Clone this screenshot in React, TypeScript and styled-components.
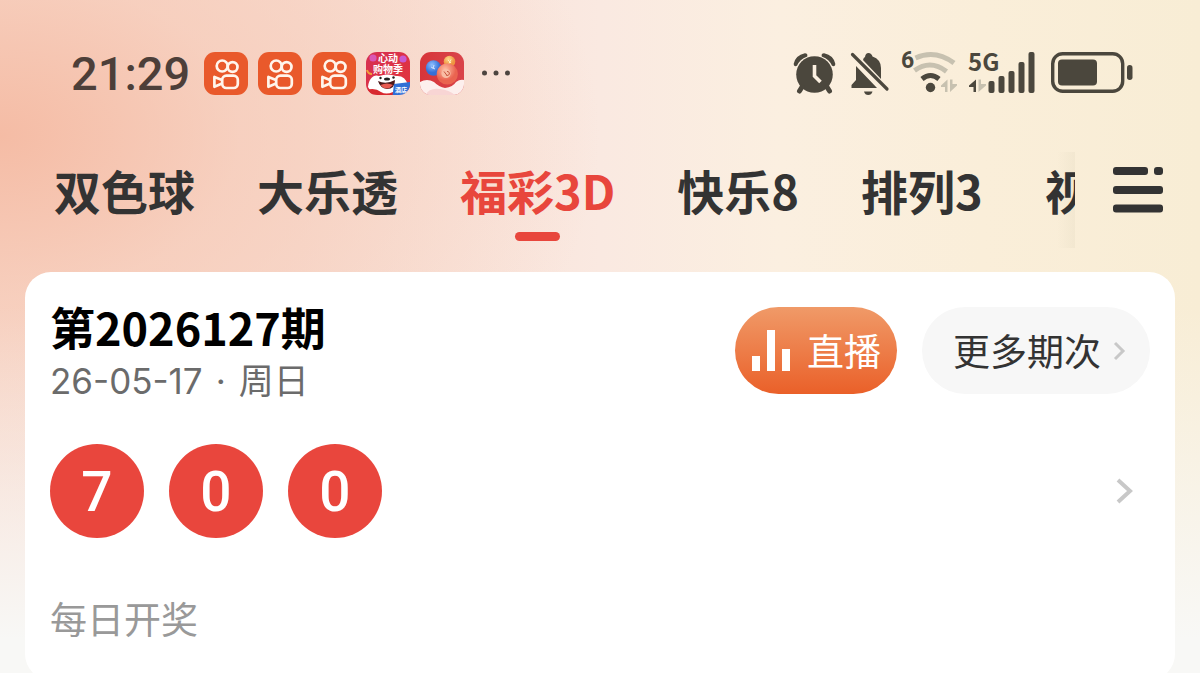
import React from 'react';
import styled, { createGlobalStyle } from 'styled-components';

const GlobalStyle = createGlobalStyle`
  *, *::before, *::after { box-sizing: border-box; }
  body {
    margin: 0;
    background: #f8f7f5;
    font-family: "Noto Sans CJK SC", sans-serif;
    color: #333;
  }
  button { font: inherit; color: inherit; border: 0; padding: 0; background: none; cursor: pointer; }
  svg { display: block; flex: none; overflow: visible; }
`;

const Page = styled.div`
  min-height: 100vh;
  overflow: hidden;
  background:
    linear-gradient(to bottom, rgba(248, 247, 246, 0) 45%, #f8f8f6 94%),
    radial-gradient(ellipse 50% 60% at 0% 20%, #f5bca5 0%, rgba(246, 200, 180, 0.6) 40%, rgba(250, 226, 216, 0) 100%),
    linear-gradient(to right, #f8d8cb 0%, #f8ddd2 25%, #fae9e1 50%, #fbefe0 65%, #faeed9 82%, #f8edd5 100%);
`;

const StatusBar = styled.header`
  display: flex;
  align-items: center;
  justify-content: space-between;
  padding: 52px 67px 0 71px;
`;

const StatusGroup = styled.div`
  display: flex;
  align-items: center;
  gap: 10px;
  height: 44px;
`;

const Clock = styled.time`
  font: 500 47px/44px Roboto, sans-serif;
  color: #4d3f39;
  margin-right: 4px;
`;

const TabBar = styled.div`
  display: flex;
  align-items: flex-start;
  justify-content: space-between;
  padding-top: 56px;
`;

const Tabs = styled.nav`
  flex: 1;
  min-width: 0;
  display: flex;
  gap: 62px;
  padding-left: 54px;
  overflow: hidden;
  height: 96px;
  background: linear-gradient(to left, rgba(225, 215, 190, 0.28), rgba(225, 215, 190, 0) 18px);
`;

const Tab = styled.button<{ $active?: boolean }>`
  flex: none;
  display: flex;
  flex-direction: column;
  align-items: center;
  justify-content: space-between;
  height: 89px;
  font-size: 47px;
  font-weight: 700;
  line-height: 76px;
  white-space: nowrap;
  color: ${(p) => (p.$active ? '#e8463c' : '#333')};
  &::after {
    content: '';
    width: 45px;
    height: 9px;
    border-radius: 5px;
    background: ${(p) => (p.$active ? '#e8463c' : 'transparent')};
  }
`;

const MenuButton = styled.button`
  flex: none;
  width: 125px;
  height: 76px;
  display: flex;
  align-items: center;
  justify-content: center;
`;

const Card = styled.main`
  margin: 24px 25px 0;
  padding: 35px 25px 36px;
  border-radius: 26px;
  background: #fff;
`;

const CardHead = styled.div`
  display: flex;
  align-items: flex-start;
  justify-content: space-between;
`;

const Issue = styled.h1`
  margin: 0;
  font-size: 45px;
  font-weight: 700;
  line-height: 40px;
  color: #000;
`;

const DrawDate = styled.p`
  display: flex;
  gap: 13px;
  margin: 16px 0 0;
  font: 400 35px/36px Inter, "Noto Sans CJK SC", sans-serif;
  color: #6b6b6b;
`;

const Actions = styled.div`
  display: flex;
  gap: 25px;
`;

const Pill = styled.button<{ $live?: boolean }>`
  display: flex;
  align-items: center;
  height: 87px;
  border-radius: 44px;
  font-size: 37px;
  line-height: 87px;
  gap: ${(p) => (p.$live ? 17 : 12)}px;
  padding: ${(p) => (p.$live ? '0 16px 0 17px' : '0 24px 0 31px')};
  color: ${(p) => (p.$live ? '#fff' : '#333')};
  background: ${(p) => (p.$live ? 'linear-gradient(#f09a68, #ea6029)' : '#f7f7f7')};
`;

const ResultRow = styled.a`
  display: flex;
  align-items: center;
  justify-content: space-between;
  margin-top: 45px;
  padding-right: 17px;
  text-decoration: none;
`;

const Balls = styled.span`
  display: flex;
  gap: 25px;
`;

const Ball = styled.span`
  width: 94px;
  height: 94px;
  border-radius: 50%;
  background: #e9463d;
  color: #fff;
  text-align: center;
  font: 500 55px/96px Roboto, sans-serif;
`;

const Note = styled.p`
  margin: 54px 0 0;
  font-size: 37px;
  line-height: 52px;
  color: #999;
`;

const KuaishouIcon = () => (
  <svg width="44" height="44" viewBox="0 0 44 44" fill="none" stroke="#fff5ec" strokeWidth="2.7">
    <rect width="44" height="43" rx="11" fill="#e9592b" stroke="none" />
    <circle cx="18.2" cy="14" r="5.5" />
    <circle cx="28.6" cy="15" r="4.9" />
    <rect x="18.2" y="23.6" width="15.6" height="12.4" rx="4.2" />
    <path d="M18 28 L10.4 24.9 V34.8 L18 31.6" strokeLinejoin="round" />
  </svg>
);

const ShopIcon = () => (
  <svg width="44" height="44" viewBox="0 0 44 44">
    <defs>
      <clipPath id="shopClip"><rect width="44" height="43" rx="11" /></clipPath>
      <linearGradient id="shopBg" x1="0" x2="1" y1="0" y2="1">
        <stop offset="0" stopColor="#d62f52" /><stop offset="1" stopColor="#e2353b" />
      </linearGradient>
    </defs>
    <g clipPath="url(#shopClip)">
      <rect width="44" height="44" fill="url(#shopBg)" />
      <circle cx="7" cy="6" r="3.6" fill="#d957b5" /><circle cx="37" cy="7" r="3.6" fill="#c95ad0" />
      <path d="M1 18 q1 4 5 4" stroke="#f2a13c" strokeWidth="2" fill="none" />
      <path d="M2 35 C3 26 8 22 13 24 Q22 21 30 24 Q39 23 42 33 V44 H8 Z" fill="#fff" />
      <path d="M12 29 Q20 33 29 28 Q29 37 21 37 Q14 36 12 29Z" fill="#4a1718" />
      <path d="M14.5 33 Q21 30 27 33 Q24 36.5 21 36.5 Q17 36.5 14.5 33Z" fill="#e85a50" />
      <ellipse cx="21" cy="27" rx="3" ry="1.6" fill="#222" />
      <circle cx="14.5" cy="26" r="1.2" fill="#222" /><circle cx="27.5" cy="25.5" r="1.2" fill="#222" />
      <path d="M0 38 Q9 35 15 40 Q20 43 27 40 V44 H0Z" fill="#d82a30" />
      <path d="M28 32 L44 30 V44 H26.5Z" fill="#2f6fd6" />
      <g fill="#fff" fontFamily="Noto Sans CJK SC, sans-serif" fontWeight="700" textAnchor="middle">
        <text x="22" y="10" fontSize="10">心动</text>
        <text x="22" y="21" fontSize="10">购物季</text>
        <text x="35" y="40" fontSize="6">酒店</text>
      </g>
    </g>
  </svg>
);

const LotteryIcon = () => (
  <svg width="44" height="44" viewBox="0 0 44 44">
    <defs>
      <clipPath id="lotClip"><rect width="44" height="43" rx="11" /></clipPath>
      <linearGradient id="lotBg" x1="0" x2="1"><stop offset="0" stopColor="#d7353a" /><stop offset="1" stopColor="#d9444a" /></linearGradient>
      <radialGradient id="lotRed" cx=".4" cy=".3"><stop offset="0" stopColor="#ffc0a4" /><stop offset="1" stopColor="#ea6450" /></radialGradient>
      <radialGradient id="lotBlue" cx=".4" cy=".3"><stop offset="0" stopColor="#8fc0ff" /><stop offset="1" stopColor="#3570d8" /></radialGradient>
      <radialGradient id="lotGold" cx=".4" cy=".3"><stop offset="0" stopColor="#ffd98c" /><stop offset="1" stopColor="#ee9440" /></radialGradient>
    </defs>
    <g clipPath="url(#lotClip)">
      <rect width="44" height="44" fill="url(#lotBg)" />
      <path d="M0 30 Q7 26 14 30 Q19 35 25 36 Q33 35 36 30 Q40 27 44 28 V44 H0Z" fill="#fdefed" />
      <path d="M5 44 Q9 35 20 37 Q30 38 36 44Z" fill="#f8d5d4" />
      <circle cx="29.5" cy="9.5" r="5.8" fill="url(#lotGold)" />
      <path d="M28 8 l3 3 M31 7.5 l-2 4" stroke="#fff0c4" strokeWidth="1" />
      <circle cx="13.5" cy="16" r="7.7" fill="url(#lotBlue)" />
      <circle cx="27.3" cy="22" r="10.6" fill="url(#lotRed)" />
      <circle cx="26" cy="21.5" r="4.6" fill="#f9bda4" />
      <path d="M24 19.5 l3 4 M27 19.5 a2 2 0 1 1 -1 3.4" stroke="#c9573f" strokeWidth="1" fill="none" />
      <path d="M11 15 l4 2 M14 13 l-1 4" stroke="#cfe2ff" strokeWidth="1" />
    </g>
  </svg>
);

const MoreDots = () => (
  <svg width="44" height="44" viewBox="0 0 44 44" fill="#4d4540">
    <circle cx="10.5" cy="21" r="2.5" /><circle cx="22" cy="21" r="2.5" /><circle cx="33.5" cy="21" r="2.5" />
  </svg>
);

const INK = '#4b473d';
const FAINT = '#c7c1b0';

const AlarmIcon = () => (
  <svg width="46" height="44" viewBox="0 0 46 44" fill="none" stroke={INK}>
    <circle cx="20.5" cy="22.5" r="18.3" fill={INK} stroke="none" />
    <path d="M0.5 12 Q2 4 11 2 Q13 2 12.5 4 Q5 7 2.5 13 Q0.5 14 0.5 12Z" fill={INK} strokeWidth="1.6" />
    <path d="M40.5 12 Q39 4 30 2 Q28 2 28.5 4 Q36 7 38.5 13 Q40.5 14 40.5 12Z" fill={INK} strokeWidth="1.6" />
    <path d="M8 35 L5.5 39 M33 35 L35.5 39" strokeWidth="5" strokeLinecap="round" />
    <path d="M20.5 13 V24 L26.5 30" stroke="#fbefe0" strokeWidth="3.6" />
  </svg>
);

const MutedBellIcon = () => (
  <svg width="41" height="44" viewBox="0 0 41 44">
    <path d="M13 8 Q13.5 5.500 15 5 Q15.5 1 18.5 1 Q21.5 1 22.5 4.500 Q31 7.500 31 16 V27 Z" fill={INK} />
    <path d="M6 14 L27 36 H1.5 V33 L6 28 Z" fill={INK} />
    <path d="M2.5 2.5 L37 37" stroke={INK} strokeWidth="3.2" strokeLinecap="round" />
    <path d="M14 39.5 H22.5 Q21.5 43 18.2 43 Q15 43 14 39.5Z" fill={INK} />
  </svg>
);

const WifiIcon = () => (
  <svg width="57" height="44" viewBox="0 0 57 44" fill="none">
    <text x="0" y="16" fontSize="23" fontWeight="700" fontFamily="Roboto, sans-serif" fill={INK}>6</text>
    <path d="M14.5 6 Q34 -3 53 11" stroke={FAINT} strokeWidth="5" />
    <path d="M13.5 18.5 Q29.5 7 45.5 19.5" stroke={FAINT} strokeWidth="5" />
    <path d="M21 27 Q29.5 20 38 27" stroke={INK} strokeWidth="5" />
    <circle cx="29.5" cy="35.5" r="4.7" fill={INK} />
    <path d="M46.5 27.5 V40 H44 V35 H40 V33.5Z M49 40 V27.5 H51.5 V32 H56 V33.5Z" fill={FAINT} />
  </svg>
);

const SignalIcon = () => (
  <svg width="73" height="44" viewBox="0 0 73 44" fill={INK}>
    <text x="0" y="19" fontSize="24" fontWeight="700" fontFamily="Noto Sans CJK SC, sans-serif">5G</text>
    <path d="M8 27.5 V40 H5.5 V35 H1 V33.5Z" />
    <path d="M10.5 40 V27.5 H13 V32 H18 V33.5Z" fill={FAINT} />
    <rect x="20.5" y="29" width="6" height="12" rx="2" />
    <rect x="30.5" y="24" width="6" height="17" rx="2" />
    <rect x="40.5" y="19" width="6" height="22" rx="2" />
    <rect x="50.5" y="10" width="6" height="31" rx="2" />
    <rect x="60.5" y="0" width="6" height="41" rx="2" />
  </svg>
);

const BatteryIcon = () => (
  <svg width="82" height="44" viewBox="0 0 82 44" fill={INK}>
    <rect x="1.7" y="1.7" width="70" height="37.6" rx="10" fill="none" stroke={INK} strokeWidth="3.4" />
    <rect x="7" y="7.5" width="39" height="26" rx="4" />
    <rect x="76" y="13" width="5.5" height="15" rx="2.7" />
  </svg>
);

const MenuIcon = () => (
  <svg width="52" height="48" viewBox="0 0 52 48" fill="#333">
    <rect x="1" y="1" width="35" height="8" rx="3" />
    <rect x="42" y="1" width="9" height="8" rx="3" />
    <rect x="1" y="20" width="50" height="8" rx="3" />
    <rect x="1" y="38.5" width="50" height="8" rx="3" />
  </svg>
);

const BarsIcon = () => (
  <svg width="38" height="42" viewBox="0 0 38 42" fill="#fff">
    <rect x="0" y="26" width="8" height="15" /><rect x="15" y="0" width="8" height="41" /><rect x="30" y="19" width="8" height="22" />
  </svg>
);

const Chevron = ({ w, h, stroke }: { w: number; h: number; stroke: number }) => (
  <svg width={w} height={h} viewBox={`0 0 ${w} ${h}`} fill="none" stroke="#c8c8c8" strokeWidth={stroke}>
    <path d={`M2 2 L${w - 3} ${h / 2} L2 ${h - 2}`} />
  </svg>
);

const tabs = ['双色球', '大乐透', '福彩3D', '快乐8', '排列3', '视频'];

export default function App() {
  return (
    <Page>
      <GlobalStyle />
      <StatusBar>
        <StatusGroup>
          <Clock>21:29</Clock>
          <KuaishouIcon />
          <KuaishouIcon />
          <KuaishouIcon />
          <ShopIcon />
          <LotteryIcon />
          <MoreDots />
        </StatusGroup>
        <StatusGroup>
          <AlarmIcon />
          <MutedBellIcon />
          <WifiIcon />
          <SignalIcon />
          <BatteryIcon />
        </StatusGroup>
      </StatusBar>
      <TabBar>
        <Tabs aria-label="彩种">
          {tabs.map((name) => (
            <Tab key={name} $active={name === '福彩3D'}>{name}</Tab>
          ))}
        </Tabs>
        <MenuButton aria-label="全部彩种"><MenuIcon /></MenuButton>
      </TabBar>
      <Card>
        <CardHead>
          <div>
            <Issue>第2026127期</Issue>
            <DrawDate>
              <span>26-05-17</span>
              <span>·</span>
              <span>周日</span>
            </DrawDate>
          </div>
          <Actions>
            <Pill $live><BarsIcon />直播</Pill>
            <Pill>更多期次<Chevron w={13} h={20} stroke={3} /></Pill>
          </Actions>
        </CardHead>
        <ResultRow href="#detail" aria-label="开奖详情">
          <Balls>
            <Ball>7</Ball>
            <Ball>0</Ball>
            <Ball>0</Ball>
          </Balls>
          <Chevron w={17} h={26} stroke={4} />
        </ResultRow>
        <Note>每日开奖</Note>
      </Card>
    </Page>
  );
}
